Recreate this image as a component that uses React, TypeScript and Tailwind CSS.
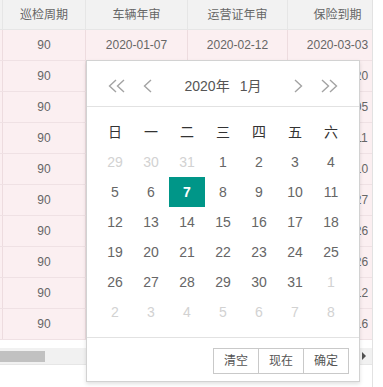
const rows = [
  { c2: "2020-01-07", c3: "2020-02-12", c4: "2020-03-03" },
  { c2: "2020-01-15", c3: "2020-02-18", c4: "2020-03-20" },
  { c2: "2020-01-09", c3: "2020-02-21", c4: "2020-03-05" },
  { c2: "2020-01-11", c3: "2020-02-06", c4: "2020-03-11" },
  { c2: "2020-01-20", c3: "2020-02-14", c4: "2020-03-10" },
  { c2: "2020-01-23", c3: "2020-02-25", c4: "2020-03-27" },
  { c2: "2020-01-18", c3: "2020-02-10", c4: "2020-03-26" },
  { c2: "2020-01-27", c3: "2020-02-19", c4: "2020-03-26" },
  { c2: "2020-01-05", c3: "2020-02-03", c4: "2020-03-12" },
  { c2: "2020-01-29", c3: "2020-02-27", c4: "2020-03-16" },
];

const weekDays = ["日", "一", "二", "三", "四", "五", "六"];

const days: { d: number; muted?: boolean }[] = [
  { d: 29, muted: true }, { d: 30, muted: true }, { d: 31, muted: true },
  ...Array.from({ length: 31 }, (_, i) => ({ d: i + 1 })),
  ...Array.from({ length: 8 }, (_, i) => ({ d: i + 1, muted: true })),
];

const Chevron = ({ double, flip }: { double?: boolean; flip?: boolean }) => (
  <svg
    width={double ? 18 : 9}
    height="14"
    viewBox={double ? "0 0 18 14" : "0 0 9 14"}
    className={flip ? "-scale-x-100" : ""}
    fill="none"
    stroke="#a3a3a3"
    strokeWidth="1.4"
  >
    <polyline points="8,1 1.5,7 8,13" />
    {double && <polyline points="16,1 9.5,7 16,13" />}
  </svg>
);

const App = () => {
  return (
    <div className="relative w-[383px] h-[387px] overflow-hidden bg-white font-['Liberation_Sans','Noto_Sans_CJK_SC',sans-serif]">
      {/* table */}
      <div className="w-[373px] h-full border-r border-[#e2e2e2] overflow-hidden">
        <div className="w-[500px]">
          <div className="flex h-[30px] bg-[#f2f2f2] border-b border-[#e6e6e6] text-[12px] text-[#666]">
            <div className="w-[3px] border-r border-[#e6e6e6]" />
            <div className="w-[83px] border-r border-[#e6e6e6] flex items-center justify-center">巡检周期</div>
            <div className="w-[102px] border-r border-[#e6e6e6] flex items-center justify-center">车辆年审</div>
            <div className="w-[100px] border-r border-[#e6e6e6] flex items-center justify-center">运营证年审</div>
            <div className="w-[100px] border-r border-[#e6e6e6] flex items-center justify-center">保险到期</div>
          </div>
          {rows.map((r, i) => (
            <div key={i} className="flex h-[31px] bg-[#fbeff1] border-b border-[#efe1e4] text-[12px] text-[#666]">
              <div className="w-[3px] border-r border-[#eddcdf]" />
              <div className="w-[83px] border-r border-[#eddcdf] flex items-center justify-center">90</div>
              <div className="w-[102px] border-r border-[#eddcdf] flex items-center justify-center">{r.c2}</div>
              <div className="w-[100px] border-r border-[#eddcdf] flex items-center justify-center">{r.c3}</div>
              <div className="w-[100px] border-r border-[#eddcdf] flex items-center justify-center">{r.c4}</div>
            </div>
          ))}
        </div>
        <div className="h-[8px]" />
        <div className="flex h-[17px] bg-[#f1f1f1] border-b border-[#e6e6e6] items-center">
          <div className="w-[45px] h-[11px] bg-[#c1c1c1]" />
          <div className="flex-1" />
          <div className="w-[17px] flex items-center justify-center">
            <div className="w-0 h-0 border-y-[4px] border-y-transparent border-l-[4px] border-l-[#505050]" />
          </div>
        </div>
      </div>

      {/* date picker */}
      <div className="absolute left-[86px] top-[60px] w-[274px] bg-white border border-[#d2d2d2] shadow-[0_2px_4px_rgba(0,0,0,0.12)]">
        <div className="flex items-center h-[46px] pt-[10px] pb-[5px] border-b border-[#e2e2e2]">
          <div className="flex items-center ml-[21px] gap-[17px]">
            <Chevron double />
            <Chevron />
          </div>
          <div className="flex-1 flex justify-center text-[14px] text-[#555] gap-[10px]">
            <span>2020年</span>
            <span>1月</span>
          </div>
          <div className="flex items-center mr-[21px] gap-[17px]">
            <Chevron flip />
            <Chevron double flip />
          </div>
        </div>
        <div className="p-[10px]">
          <div className="grid grid-cols-7 text-[14px]">
            {weekDays.map((w) => (
              <div key={w} className="h-[30px] flex items-center justify-center text-[#333]">{w}</div>
            ))}
            {days.map((d, i) => (
              <div
                key={i}
                className={`h-[30px] flex items-center justify-center ${
                  d.muted
                    ? "text-[#d2d2d2]"
                    : d.d === 7
                    ? "bg-[#009688] text-white font-bold"
                    : "text-[#666]"
                }`}
              >
                {d.d}
              </div>
            ))}
          </div>
        </div>
        <div className="h-[44px] border-t border-[#e2e2e2] pt-[10px] pr-[10px] flex justify-end items-start">
          <div className="flex text-[12px] text-[#555]">
            <span className="h-[26px] px-[10px] border border-r-0 border-[#c9c9c9] flex items-center">清空</span>
            <span className="h-[26px] px-[10px] border border-r-0 border-[#c9c9c9] flex items-center">现在</span>
            <span className="h-[26px] px-[10px] border border-[#c9c9c9] flex items-center">确定</span>
          </div>
        </div>
      </div>
    </div>
  );
};

export default App;
